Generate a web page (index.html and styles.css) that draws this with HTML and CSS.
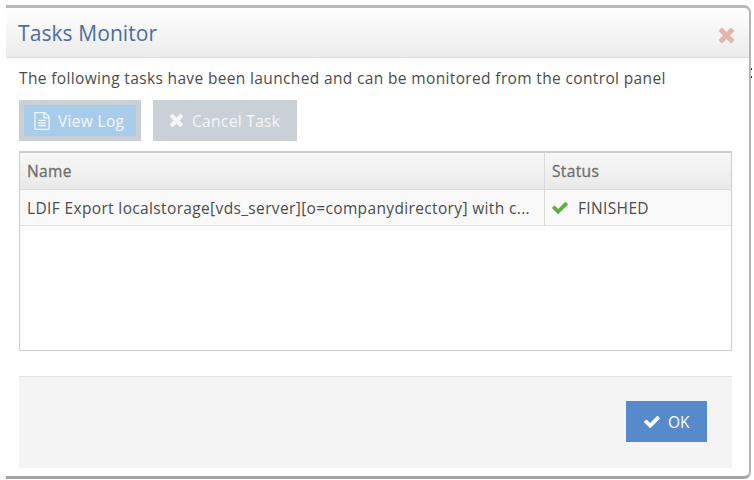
FILE: index.html
```html
<!DOCTYPE html>
<html lang="en">
<head>
<meta charset="utf-8">
<title>Tasks Monitor</title>
<link rel="stylesheet" href="styles.css">
</head>
<body>
<svg class="symbols" aria-hidden="true">
  <symbol id="check" viewBox="121 334 1550 1188"><path d="M1671 566q0 40-28 68l-724 724-136 136q-28 28-68 28t-68-28l-136-136-362-362q-28-28-28-68t28-68l136-136q28-28 68-28t68 28l294 295 656-657q28-28 68-28t68 28l136 136q28 28 28 68z"/></symbol>
  <symbol id="times" viewBox="302 366 1188 1188"><path d="M1490 1322q0 40-28 68l-136 136q-28 28-68 28t-68-28l-294-294-294 294q-28 28-68 28t-68-28l-136-136q-28-28-28-68t28-68l294-294-294-294q-28-28-28-68t28-68l136-136q28-28 68-28t68 28l294 294 294-294q28-28 68-28t68 28l136 136q28 28 28 68t-28 68l-294 294 294 294q28 28 28 68z"/></symbol>
  <symbol id="file" viewBox="128 0 1536 1792"><path d="M1596 380q28 28 48 76t20 88v1152q0 40-28 68t-68 28h-1344q-40 0-68-28t-28-68v-1600q0-40 28-68t68-28h896q40 0 88 20t76 48zm-444-244v376h376q-10-29-22-41l-313-313q-12-12-41-22zm384 1528v-1024h-416q-40 0-68-28t-28-68v-416h-768v1536h1280zm-1024-864q0-14 9-23t23-9h704q14 0 23 9t9 23v64q0 14-9 23t-23 9h-704q-14 0-23-9t-9-23v-64zm736 224q14 0 23 9t9 23v64q0 14-9 23t-23 9h-704q-14 0-23-9t-9-23v-64q0-14 9-23t23-9h704zm0 256q14 0 23 9t9 23v64q0 14-9 23t-23 9h-704q-14 0-23-9t-9-23v-64q0-14 9-23t23-9h704z"/></symbol>
</svg>
<div class="page">
  <section class="dialog">
    <header class="dialog-header">
      <h1>Tasks Monitor</h1>
      <svg class="close"><use href="#times"/></svg>
    </header>
    <div class="dialog-body">
      <p class="message">The following tasks have been launched and can be monitored from the control panel</p>
      <div class="toolbar">
        <button class="btn view"><svg class="icon-file"><use href="#file"/></svg><span>View Log</span></button>
        <button class="btn cancel"><svg class="icon-times"><use href="#times"/></svg><span>Cancel Task</span></button>
      </div>
      <div class="grid">
        <div class="row head"><div class="cell name">Name</div><div class="cell">Status</div></div>
        <div class="row item">
          <div class="cell name">LDIF Export localstorage[vds_server][o=companydirectory] with c...</div>
          <div class="cell status"><svg class="icon-check"><use href="#check"/></svg><span>FINISHED</span></div>
        </div>
      </div>
      <footer class="actions">
        <button class="btn ok"><svg class="icon-check"><use href="#check"/></svg><span>OK</span></button>
      </footer>
    </div>
  </section>
  <div class="behind"><i></i><i></i></div>
</div>
</body>
</html>
```
FILE: styles.css
```css
* { box-sizing: border-box; }
body {
  margin: 0;
  background: #fff;
  font: 15.5px/20px "Open Sans", sans-serif;
  letter-spacing: 0.355px;
  color: #4c4c4c;
}
.symbols { position: absolute; width: 0; height: 0; }
svg { display: block; flex: none; fill: currentColor; }
.page { display: flex; height: 480px; padding: 5px 0 1px 6px; overflow: hidden; }
.dialog {
  width: 745px;
  height: 474px;
  border-top: 3px solid #b9b9b9;
  border-right: 2px solid #b4b4b4;
  border-bottom: 3px solid #a3a3a3;
  border-radius: 0 7px 7px 0;
}
.dialog-header {
  display: flex;
  align-items: center;
  justify-content: space-between;
  height: 50px;
  padding: 0 15px 0 12px;
  border-bottom: 1px solid #dedede;
  border-top-right-radius: 5px;
  background: linear-gradient(#fff, #ebebeb);
}
h1 {
  margin: 0;
  font-size: 21px;
  font-weight: 400;
  line-height: 28px;
  letter-spacing: 0.08px;
  color: #4d6ca3;
}
.close { width: 15px; height: 15px; margin-top: 6px; color: #e3b5ac; }
.dialog-body { padding: 10px 17px 0 13px; }
.message { margin: 0 0 12px; white-space: nowrap; }
.toolbar { display: flex; gap: 12px; height: 51px; }
.btn {
  display: flex;
  align-items: center;
  height: 41px;
  border: 0;
  padding: 0;
  font: inherit;
  letter-spacing: 0.33px;
  color: #fff;
  white-space: nowrap;
}
.view {
  width: 122px;
  padding-left: 10px;
  gap: 8px;
  border: 5px solid #c9d1d7;
  background: #a9cceb;
  color: #f3f8fc;
}
.cancel { width: 144px; padding-left: 17px; gap: 9px; background: #c9d0d7; color: #f4f6f8; }
.icon-file { width: 16px; height: 18px; }
.icon-times { width: 13px; height: 13px; }
.icon-check { width: 16px; height: 12px; }
.grid { height: 200px; border: 1px solid #cdcdcd; border-top-width: 2px; }
.row { display: flex; }
.cell { display: flex; align-items: center; padding-left: 7px; white-space: nowrap; }
.name { width: 525px; border-right: 1px solid #dadada; }
.head {
  height: 37px;
  padding-top: 0;
  border-bottom: 1px solid #dadada;
  background: linear-gradient(#f7f7f7, #e9e9e9);
  color: #6d6d6d;
  -webkit-text-stroke: 0.3px #6d6d6d;
}
.item { height: 36px; border-bottom: 1px solid #e0e0e0; background: #f9f9f9; }
.status { gap: 10px; }
.status .icon-check { color: #63ad45; }
.actions {
  display: flex;
  justify-content: flex-end;
  height: 92px;
  margin-top: 25px;
  padding: 24px 25px 0 0;
  border-top: 1px solid #e2e2e2;
  background: #f4f4f4;
}
.ok { width: 81px; padding-left: 18px; gap: 8px; letter-spacing: 0; background: #568acb; }
.behind { width: 3px; padding-top: 63px; }
.behind i { display: block; width: 1px; height: 2px; margin-bottom: 6px; background: #333; }
```
